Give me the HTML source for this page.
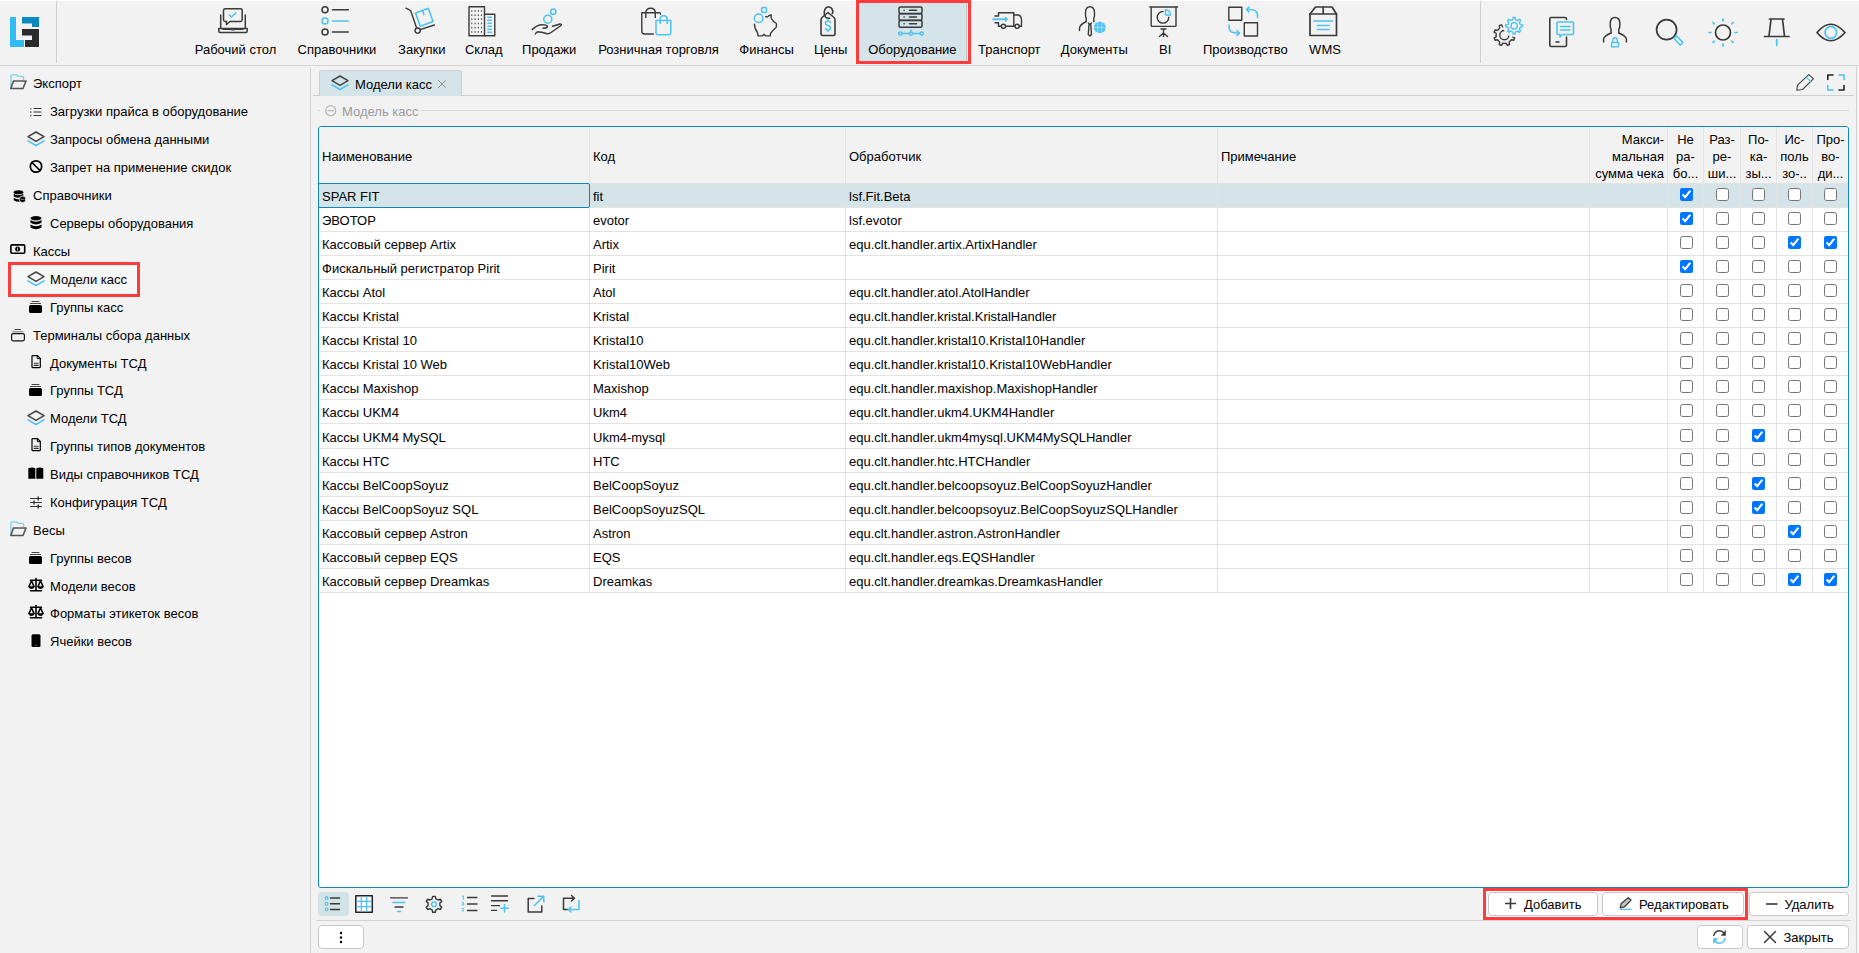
<!DOCTYPE html><html><head><meta charset="utf-8"><style>
html,body{margin:0;padding:0}
body{width:1859px;height:953px;overflow:hidden;position:relative;background:#f2f2f2;font-family:"Liberation Sans",sans-serif;font-size:13px;color:#000}
.t{position:absolute;white-space:nowrap}
svg{overflow:visible}
input[type=checkbox]{position:absolute;margin:0;width:13px;height:13px}
</style></head><body><div style="position:absolute;left:0px;top:0px;width:1859px;height:1px;background:#fff"></div><div style="position:absolute;left:10px;top:17px;width:6px;height:30px;background:#2fbcf3"></div><div style="position:absolute;left:10px;top:40px;width:13.6px;height:7px;background:#2fbcf3"></div><svg style="position:absolute;left:22px;top:17px" width="17" height="30" viewBox="0 0 17 30"><path d="M0 0H17V10H10V6.5H0Z" fill="#0b89bf"/><path d="M0 12H17V30H3V23H10V18.5H0Z" fill="#2b2b2b"/></svg><div style="position:absolute;left:56px;top:1px;width:1px;height:62px;background:#cfcfcf"></div><div style="position:absolute;left:1480px;top:1px;width:1px;height:62px;background:#cfcfcf"></div><div style="position:absolute;left:0px;top:65px;width:1859px;height:1px;background:#d3d3d3"></div><div style="position:absolute;left:856px;top:0px;width:115px;height:64px;background:#ff3b3b"></div><div style="position:absolute;left:859px;top:3px;width:109px;height:58px;background:#d4e4e8"></div><div style="position:absolute;left:966px;top:4px;width:1px;height:56px;background:#b9c9cd"></div><svg style="position:absolute;left:218px;top:8px" width="30" height="25" viewBox="0 0 30 25" fill="none" stroke-linecap="round" stroke-linejoin="round"><g stroke="#3a3a3a" stroke-width="1.5"><path d="M2.7 7V20M27.3 7V20"/><path d="M0.8 20.5H29.2V23Q29.2 24.5 27.7 24.5H2.3Q0.8 24.5 0.8 23Z"/><path d="M5 21.3H12Q15 22.3 18 21.3H25" stroke-width="1.2"/><path d="M5.5 2.5Q5.5 0.8 7.2 0.8H22.5Q24.2 0.8 24.2 2.5V11.8Q24.2 13.5 22.5 13.5H12L8.5 16.5V13.5H7.2Q5.5 13.5 5.5 11.8Z"/></g><path d="M11.5 7L13.5 9L18 4.8" stroke="#4cc3f1" stroke-width="1.5"/></svg><div class="t" style="left:135.5px;top:42px;width:200px;text-align:center;line-height:16px;">Рабочий стол</div><svg style="position:absolute;left:321px;top:6px" width="28" height="30" viewBox="0 0 28 30" fill="none" stroke-linecap="round" stroke-linejoin="round"><g stroke="#3a3a3a" stroke-width="1.5"><circle cx="4" cy="3.7" r="3"/><circle cx="4" cy="26" r="3"/><path d="M11.5 3.7H27.3M11.5 26H27.3"/></g><g stroke="#4cc3f1" stroke-width="1.5"><circle cx="4" cy="15" r="3"/><path d="M11.5 15H27.3"/></g></svg><div class="t" style="left:237.0px;top:42px;width:200px;text-align:center;line-height:16px;">Справочники</div><svg style="position:absolute;left:405px;top:7px" width="30" height="27" viewBox="0 0 30 27" fill="none" stroke-linecap="round" stroke-linejoin="round"><g stroke="#3a3a3a" stroke-width="1.4"><path d="M1 1.2L5.7 3.7L11.6 21"/><path d="M15 22.6L29.4 18"/><circle cx="12.7" cy="23.6" r="2.6"/></g><g stroke="#4cc3f1" stroke-width="1.6"><path d="M10.5 6.1L23.3 1.3L28 14.5L15.3 19.3Z"/><path d="M17.8 3.9L18.9 7.6"/></g></svg><div class="t" style="left:321.75px;top:42px;width:200px;text-align:center;line-height:16px;">Закупки</div><svg style="position:absolute;left:468px;top:5.5px" width="28" height="31" viewBox="0 0 28 31" fill="none" stroke-linecap="round" stroke-linejoin="round"><g stroke="#3a3a3a" stroke-width="1.4"><path d="M1 0.8H16.5V29.8H1Z"/><path d="M16.5 8.3H26.8V29.8H16.5"/></g><g fill="#555"><rect x="3.2" y="4.2" width="1.2" height="1.6"/><rect x="3.2" y="8.4" width="1.2" height="1.6"/><rect x="3.2" y="12.4" width="1.2" height="1.6"/><rect x="3.2" y="16.7" width="1.2" height="1.6"/><rect x="3.2" y="20.8" width="1.2" height="1.6"/><rect x="3.2" y="25.1" width="1.2" height="1.6"/><rect x="6.5" y="4.2" width="1.2" height="1.6"/><rect x="6.5" y="8.4" width="1.2" height="1.6"/><rect x="6.5" y="12.4" width="1.2" height="1.6"/><rect x="6.5" y="16.7" width="1.2" height="1.6"/><rect x="6.5" y="20.8" width="1.2" height="1.6"/><rect x="6.5" y="25.1" width="1.2" height="1.6"/><rect x="9.8" y="4.2" width="1.2" height="1.6"/><rect x="9.8" y="8.4" width="1.2" height="1.6"/><rect x="9.8" y="12.4" width="1.2" height="1.6"/><rect x="9.8" y="16.7" width="1.2" height="1.6"/><rect x="9.8" y="20.8" width="1.2" height="1.6"/><rect x="9.8" y="25.1" width="1.2" height="1.6"/><rect x="12.9" y="4.2" width="1.2" height="1.6"/><rect x="12.9" y="8.4" width="1.2" height="1.6"/><rect x="12.9" y="12.4" width="1.2" height="1.6"/><rect x="12.9" y="16.7" width="1.2" height="1.6"/><rect x="12.9" y="20.8" width="1.2" height="1.6"/><rect x="12.9" y="25.1" width="1.2" height="1.6"/></g><g stroke="#4cc3f1" stroke-width="1.5" stroke-linecap="butt"><path d="M19.3 11.3H23.8M19.3 14.3H23.8M19.3 17.3H23.8M19.3 20.3H23.8M19.3 23.3H23.8M19.3 26.3H23.8"/></g></svg><div class="t" style="left:383.75px;top:42px;width:200px;text-align:center;line-height:16px;">Склад</div><svg style="position:absolute;left:532px;top:7.5px" width="30" height="27" viewBox="0 0 30 27" fill="none" stroke-linecap="round" stroke-linejoin="round"><g stroke="#3a3a3a" stroke-width="1.5"><path d="M0.3 21.4Q5 17 9 16.7Q15.5 16.5 15.5 18.7Q15 20.2 11 20.2"/><path d="M3.3 26Q4.5 23.7 6 23.7Q11 24 15 25.7Q17 26 19 24.5L29 17.5Q30 16 28 16L20.5 18.2"/></g><g stroke="#4cc3f1" stroke-width="1.5"><circle cx="15.8" cy="11.2" r="4"/><circle cx="21.3" cy="3.7" r="2.6"/></g></svg><div class="t" style="left:449.20000000000005px;top:42px;width:200px;text-align:center;line-height:16px;">Продажи</div><svg style="position:absolute;left:641px;top:7px" width="31" height="28" viewBox="0 0 31 28" fill="none" stroke-linecap="round" stroke-linejoin="round"><g stroke="#3a3a3a" stroke-width="1.4"><path d="M12.3 27H3.5Q0.8 27 0.8 24V5.7H18.5Q19.5 5.7 19.5 7"/><path d="M4.8 10.5V6Q4.8 1.2 9.8 1.2Q14.3 1.2 14.3 6V10.5"/></g><g stroke="#4cc3f1" stroke-width="1.5"><path d="M15 13.6H29.8V25.5Q29.8 27.8 27.5 27.8H17.3Q15 27.8 15 25.5Z"/><path d="M19.2 16.5V12.5Q19.2 8.8 22.8 8.8Q26.2 8.8 26.2 12.5V16.5"/></g></svg><div class="t" style="left:558.5px;top:42px;width:200px;text-align:center;line-height:16px;">Розничная торговля</div><svg style="position:absolute;left:752.5px;top:5.5px" width="24" height="30" viewBox="0 0 24 30" fill="none" stroke-linecap="round" stroke-linejoin="round"><path d="M1.4 18.1Q1.5 23 4.5 26.5L5 29.9H9.3L11 28.2L12.7 29.9H17.4V27.6Q20 24 23 21.5Q24 19 23 17L20.7 15.7Q19.5 13.5 18.2 12.5V9Q16 9.2 14.8 10.6Q13.5 11.3 12.8 10.5" stroke="#3a3a3a" stroke-width="1.4"/><g stroke="#4cc3f1" stroke-width="1.5"><circle cx="5.6" cy="12.2" r="4.3"/><circle cx="11.1" cy="3.9" r="2.6"/></g></svg><div class="t" style="left:666.6px;top:42px;width:200px;text-align:center;line-height:16px;">Финансы</div><svg style="position:absolute;left:820px;top:5.5px" width="17" height="30" viewBox="0 0 17 30" fill="none" stroke-linecap="round" stroke-linejoin="round"><g stroke="#3a3a3a" stroke-width="1.6"><path d="M8 6.5L2 11.5Q1 12.5 1 14V28Q1 29.5 2.5 29.5H13.5Q15 29.5 15 28V14Q15 12.5 14 11.5L8 6.5"/><path d="M9.5 12.3Q7 12.5 5.5 11Q3.8 9 4.3 5.5Q5 1 8.5 1Q12 1 12.7 5Q13 6.5 12.3 7.5"/></g><g stroke="#4cc3f1" stroke-width="1.5"><path d="M10.5 16.5Q9.5 15 8 15Q5.5 15 5.5 17Q5.5 19 8 19.5Q10.5 20 10.5 22Q10.5 24 8 24Q6.5 24 5.5 22.5M8 13.5V15M8 24V25.5"/></g></svg><div class="t" style="left:730.6px;top:42px;width:200px;text-align:center;line-height:16px;">Цены</div><svg style="position:absolute;left:898px;top:6px" width="25" height="30" viewBox="0 0 25 30" fill="none" stroke-linecap="round" stroke-linejoin="round"><g stroke="#3a3a3a" stroke-width="1.5"><rect x="1" y="1" width="23" height="6.5" rx="1.5"/><rect x="1" y="7.7" width="23" height="6.5" rx="1.5"/><rect x="1" y="14.5" width="23" height="6.7" rx="1.5"/><path d="M6 4.3H6.2M11.5 4.3H18.5M6 11H6.2M11.5 11H18.5M6 17.8H6.2M11.5 17.8H18.5" stroke-width="1.5"/></g><g stroke="#4cc3f1" stroke-width="1.5"><circle cx="2.3" cy="27.5" r="1.6"/><circle cx="13" cy="27.5" r="1.6"/><circle cx="23.7" cy="27.5" r="1.6"/><path d="M4 27.5H11.4M14.6 27.5H22M13 25.9V24"/></g></svg><div class="t" style="left:812.4px;top:42px;width:200px;text-align:center;line-height:16px;">Оборудование</div><svg style="position:absolute;left:992px;top:12px" width="30" height="17" viewBox="0 0 30 17" fill="none" stroke-linecap="round" stroke-linejoin="round"><g stroke="#3a3a3a" stroke-width="1.4"><path d="M3 4H6.5V0.8H21.8V14.2"/><path d="M21.8 3H26.2Q29.5 3.5 29.5 8.5V14.2H27.3"/><path d="M9.3 14.2H9.5M13.6 14.2H22.9"/><path d="M3 10.7H6.5V14.2H9.2"/><circle cx="11.4" cy="14.3" r="2.1"/><circle cx="25.1" cy="14.3" r="2.1"/></g><path d="M0.5 7.3H13.5" stroke="#4cc3f1" stroke-width="1.9" stroke-linecap="butt"/><path d="M12.8 4.2L16.3 7.3L12.8 10.4Z" fill="#4cc3f1"/></svg><div class="t" style="left:909.3px;top:42px;width:200px;text-align:center;line-height:16px;">Транспорт</div><svg style="position:absolute;left:1079px;top:5.5px" width="28" height="30" viewBox="0 0 28 30" fill="none" stroke-linecap="round" stroke-linejoin="round"><g stroke="#3a3a3a" stroke-width="1.4"><path d="M7.2 15.5V12Q6.5 11 6.5 9.5V7Q6.5 0.8 11 0.8Q15.5 0.8 15.5 7V9.5Q15.5 11 14.8 12V15.8"/><path d="M7.2 15.5Q1 18.5 0.5 22V24.5"/><path d="M9.3 17L10.8 18.5L12.5 17M10 18.5L9.3 28.5L11 30L12.5 28.5L11.8 18.5"/></g><circle cx="20.8" cy="21.4" r="5.9" fill="#4cc3f1"/><g stroke="#e8f6fc" stroke-width="0.6" stroke-dasharray="0.8 1.2"><path d="M18.8 16V27M22.8 16V27M15.5 21.4H26"/></g></svg><div class="t" style="left:994.25px;top:42px;width:200px;text-align:center;line-height:16px;">Документы</div><svg style="position:absolute;left:1149px;top:5.5px" width="30" height="31" viewBox="0 0 30 31" fill="none" stroke-linecap="round" stroke-linejoin="round"><g stroke="#3a3a3a" stroke-width="1.4"><path d="M0.8 1H28.5"/><path d="M2.2 1.3V19.4Q2.2 20.4 3.2 20.4H26Q27 20.4 27 19.4V1.3"/><path d="M12 23H17M14.5 23V30.5M14.5 27L10.5 30.5M14.5 27L18.5 30.5"/><path d="M14 5.5A5.8 5.8 0 1 0 19.8 11.3"/></g><path d="M16.5 3.8V9H21.6Q21.3 4.2 16.5 3.8Z" stroke="#4cc3f1" stroke-width="1.4"/></svg><div class="t" style="left:1065.25px;top:42px;width:200px;text-align:center;line-height:16px;">BI</div><svg style="position:absolute;left:1228px;top:5.5px" width="31" height="31" viewBox="0 0 31 31" fill="none" stroke-linecap="round" stroke-linejoin="round"><g stroke="#3a3a3a" stroke-width="1.4"><rect x="0.8" y="1.2" width="13" height="13"/><rect x="16.3" y="16.8" width="13.2" height="13.2"/></g><g stroke="#4cc3f1" stroke-width="1.6"><path d="M29.5 11.5V9.5Q29.5 3.5 22.5 3.5H18.5M21 1L18.5 3.5L21 6"/><path d="M1 19V21Q1 27 8 27H11.5M9 24.5L11.5 27L9 29.5"/></g></svg><div class="t" style="left:1145.3px;top:42px;width:200px;text-align:center;line-height:16px;">Производство</div><svg style="position:absolute;left:1309px;top:6px" width="29" height="31" viewBox="0 0 29 31" fill="none" stroke-linecap="round" stroke-linejoin="round"><g stroke="#3a3a3a" stroke-width="1.7"><path d="M6.5 1H23L27.5 8V29.5H1V8Z"/><path d="M1 8H27.5M14.2 1V8"/></g><g stroke="#4cc3f1" stroke-width="1.7"><path d="M5 15H23.5M8.5 19.5H20M8.5 23.5H20"/></g></svg><div class="t" style="left:1225.0px;top:42px;width:200px;text-align:center;line-height:16px;">WMS</div><svg style="position:absolute;left:1493px;top:17px" width="30" height="30" viewBox="0 0 30 30" fill="none" stroke-linecap="round" stroke-linejoin="round"><defs><mask id="gm"><rect x="-5" y="-5" width="40" height="40" fill="#fff"/><circle cx="21.1" cy="8.8" r="11" fill="#000"/></mask></defs><g mask="url(#gm)" stroke="#3a3a3a" stroke-width="1.4"><path d="M11.40 9.80L12.96 9.95L14.39 7.82L16.55 8.72L16.07 11.24L17.27 12.23L18.26 13.43L20.78 12.95L21.68 15.11L19.55 16.54L19.70 18.10L19.55 19.66L21.68 21.09L20.78 23.25L18.26 22.77L17.27 23.97L16.07 24.96L16.55 27.48L14.39 28.38L12.96 26.25L11.40 26.40L9.84 26.25L8.41 28.38L6.25 27.48L6.73 24.96L5.53 23.97L4.54 22.77L2.02 23.25L1.12 21.09L3.25 19.66L3.10 18.10L3.25 16.54L1.12 15.11L2.02 12.95L4.54 13.43L5.53 12.23L6.73 11.24L6.25 8.72L8.41 7.82L9.84 9.95Z"/><path d="M11.5 13.5A4.6 4.6 0 1 0 16 18.3"/></g><g stroke="#4cc3f1" stroke-width="1.4"><path d="M18.69 2.98L19.82 2.63L20.18 0.45L22.02 0.45L22.38 2.63L23.51 2.98L24.56 3.53L26.35 2.24L27.66 3.55L26.37 5.34L26.92 6.39L27.27 7.52L29.45 7.88L29.45 9.72L27.27 10.08L26.92 11.21L26.37 12.26L27.66 14.05L26.35 15.36L24.56 14.07L23.51 14.62L22.38 14.97L22.02 17.15L20.18 17.15L19.82 14.97L18.69 14.62L17.64 14.07L15.85 15.36L14.54 14.05L15.83 12.26L15.28 11.21L14.93 10.08L12.75 9.72L12.75 7.88L14.93 7.52L15.28 6.39L15.83 5.34L14.54 3.55L15.85 2.24L17.64 3.53Z"/><circle cx="21.1" cy="8.8" r="3.2"/></g></svg><svg style="position:absolute;left:1549px;top:17px" width="25" height="30" viewBox="0 0 25 30" fill="none" stroke-linecap="round" stroke-linejoin="round"><g stroke="#3a3a3a" stroke-width="1.6"><path d="M17.5 2.5V1.8Q17.5 0.5 16 0.5H2Q0.8 0.5 0.8 2V28Q0.8 29.5 2.2 29.5H16.2Q17.5 29.5 17.5 28V20"/><path d="M7 25H10"/></g><g stroke="#4cc3f1" stroke-width="1.6"><path d="M8 6Q8 5 9 5H23.5Q24.5 5 24.5 6V16.5Q24.5 17.5 23.5 17.5H13.5L11 20V17.5H9Q8 17.5 8 16.5Z"/><path d="M11.5 9.5H21M11.5 13H21"/></g></svg><svg style="position:absolute;left:1603px;top:17px" width="24" height="30" viewBox="0 0 24 30" fill="none" stroke-linecap="round" stroke-linejoin="round"><g stroke="#3a3a3a" stroke-width="1.5"><path d="M8 16V12Q7.3 11 7.3 9.5V6Q7.3 0.5 12 0.5Q16.8 0.5 16.8 6V9.5Q16.8 11 15.8 12V16"/><path d="M8 16Q1 19 0.6 22V25M15.8 16Q23 19 23.4 22V25"/></g><g stroke="#4cc3f1" stroke-width="1.4"><rect x="8.5" y="25.5" width="7" height="4.2"/><path d="M9.8 25.5V23.5Q9.8 20.8 12 20.8Q14.2 20.8 14.2 23.5V25.5"/></g></svg><svg style="position:absolute;left:1656px;top:18px" width="28" height="29" viewBox="0 0 28 29" fill="none" stroke-linecap="round" stroke-linejoin="round"><circle cx="10.6" cy="11.7" r="10" stroke="#3a3a3a" stroke-width="1.7"/><path d="M18 20.2L20.3 17.9L27 24.4L24.2 27.2Z" stroke="#4cc3f1" stroke-width="1.5"/></svg><svg style="position:absolute;left:1708px;top:17.5px" width="30" height="30" viewBox="0 0 30 30" fill="none" stroke-linecap="round" stroke-linejoin="round"><circle cx="15" cy="14.5" r="7.5" stroke="#3a3a3a" stroke-width="1.7"/><g stroke="#4cc3f1" stroke-width="1.7"><path d="M15 1V3M15 26V28M1 14.5H3M27 14.5H29M5 4.5L6.3 5.8M23.7 23.2L25 24.5M5 24.5L6.3 23.2M23.7 5.8L25 4.5"/></g></svg><svg style="position:absolute;left:1764px;top:17.5px" width="26" height="30" viewBox="0 0 26 30" fill="none" stroke-linecap="round" stroke-linejoin="round"><g stroke="#3a3a3a" stroke-width="1.7"><path d="M5.5 1H20M7 1.5L5 18M18.5 1.5L20.5 18M0.5 18.5H25"/></g><path d="M12.7 21.5V27.5" stroke="#4cc3f1" stroke-width="1.7"/></svg><svg style="position:absolute;left:1815.5px;top:21.5px" width="30" height="21" viewBox="0 0 30 21" fill="none" stroke-linecap="round" stroke-linejoin="round"><path d="M1 10.5Q14.5 -6 29 10.5Q14.5 27 1 10.5Z" stroke="#3a3a3a" stroke-width="1.7"/><circle cx="14.8" cy="10.5" r="5.8" stroke="#4cc3f1" stroke-width="1.7"/></svg><div style="position:absolute;left:310px;top:68px;width:1px;height:885px;background:#d3d3d3"></div><div style="position:absolute;left:8px;top:262px;width:132px;height:35px;border:3px solid #ff3b3b;box-sizing:border-box;background:#f5f6f6"></div><svg style="position:absolute;left:10px;top:74px" width="17" height="15" viewBox="0 0 17 15" fill="none" stroke-linecap="round" stroke-linejoin="round"><path d="M1 14V2Q1 0.8 2 0.8H6.5L8 2.3H12.5Q13.5 2.3 13.5 3.5V5.5" stroke="#4cc3f1" stroke-width="1.3" opacity="0.7"/><path d="M3.5 7H16L13 14.5H0.8Z" stroke="#555" stroke-width="1.6"/></svg><div class="t" style="left:33px;top:76px;line-height:16px;">Экспорт</div><svg style="position:absolute;left:29.5px;top:106.5px" width="12" height="10" viewBox="0 0 12 10" fill="none" stroke-linecap="round" stroke-linejoin="round"><g stroke="#333" stroke-width="1.2"><path d="M4 1.5H11M4 5H11M4 8.5H11"/><path d="M0.8 1.5V2M0.8 4.5V5.5M0.8 8V9" stroke="#555"/></g></svg><div class="t" style="left:50px;top:104px;line-height:16px;">Загрузки прайса в оборудование</div><svg style="position:absolute;left:27px;top:131px" width="18" height="15" viewBox="0 0 18 15" fill="none" stroke-linecap="round" stroke-linejoin="round"><path d="M9 1L17 5.7L9 10.3L1 5.7Z" stroke="#444" stroke-width="1.5"/><path d="M1 9.8L9 14.5L17 9.8" stroke="#4cc3f1" stroke-width="1.5"/></svg><div class="t" style="left:50px;top:132px;line-height:16px;">Запросы обмена данными</div><svg style="position:absolute;left:28.5px;top:159.5px" width="14" height="13" viewBox="0 0 14 13" fill="none" stroke-linecap="round" stroke-linejoin="round"><circle cx="7" cy="6.5" r="5.7" stroke="#000" stroke-width="1.7"/><path d="M3 2.5L11 10.5" stroke="#000" stroke-width="1.7"/></svg><div class="t" style="left:50px;top:160px;line-height:16px;">Запрет на применение скидок</div><svg style="position:absolute;left:12.5px;top:189.5px" width="14" height="13" viewBox="0 0 14 13" fill="none" stroke-linecap="round" stroke-linejoin="round"><g fill="#000"><ellipse cx="5.5" cy="2.2" rx="4.8" ry="2"/><path d="M0.7 3.8Q5.5 6.8 10.3 3.8V6.2Q5.5 9.2 0.7 6.2Z"/><path d="M0.7 7.8Q5.5 10.8 10.3 7.8V10.2Q5.5 13.2 0.7 10.2Z"/></g><circle cx="9.6" cy="9.3" r="3.3" fill="#000" stroke="#f2f2f2" stroke-width="0.8"/><path d="M8 9.3H11.2" stroke="#999" stroke-width="0.9"/></svg><div class="t" style="left:33px;top:188px;line-height:16px;">Справочники</div><svg style="position:absolute;left:29.5px;top:215.5px" width="12" height="14" viewBox="0 0 12 14" fill="none" stroke-linecap="round" stroke-linejoin="round"><g fill="#000"><ellipse cx="6" cy="2.3" rx="5.5" ry="2.2"/><path d="M0.5 4Q6 7.5 11.5 4V6.8Q6 10.3 0.5 6.8Z"/><path d="M0.5 8.5Q6 12 11.5 8.5V11.5Q6 15 0.5 11.5Z"/></g></svg><div class="t" style="left:50px;top:216px;line-height:16px;">Серверы оборудования</div><svg style="position:absolute;left:10px;top:244px" width="16" height="11" viewBox="0 0 16 11" fill="none" stroke-linecap="round" stroke-linejoin="round"><rect x="0.9" y="0.9" width="13.8" height="8.4" rx="1" stroke="#000" stroke-width="1.6"/><circle cx="7.6" cy="5" r="2.5" fill="#000"/><path d="M7.6 3.9V6.2" stroke="#ddd" stroke-width="0.9"/></svg><div class="t" style="left:33px;top:244px;line-height:16px;">Кассы</div><svg style="position:absolute;left:27px;top:271px" width="18" height="15" viewBox="0 0 18 15" fill="none" stroke-linecap="round" stroke-linejoin="round"><path d="M9 1L17 5.7L9 10.3L1 5.7Z" stroke="#444" stroke-width="1.5"/><path d="M1 9.8L9 14.5L17 9.8" stroke="#4cc3f1" stroke-width="1.5"/></svg><div class="t" style="left:50px;top:272px;line-height:16px;">Модели касс</div><svg style="position:absolute;left:29px;top:301px" width="13" height="12" viewBox="0 0 13 12" fill="none" stroke-linecap="round" stroke-linejoin="round"><path d="M3 0.5H10M1.5 2.5H11.5" stroke="#444" stroke-width="1"/><rect x="0" y="4" width="13" height="8" rx="1.6" fill="#000"/></svg><div class="t" style="left:50px;top:300px;line-height:16px;">Группы касс</div><svg style="position:absolute;left:11px;top:329px" width="14" height="12" viewBox="0 0 14 12" fill="none" stroke-linecap="round" stroke-linejoin="round"><path d="M4 0.5H9.5" stroke="#444" stroke-width="1"/><path d="M1.5 2.8H12" stroke="#777" stroke-width="1"/><rect x="0.6" y="4.6" width="12.8" height="7.2" rx="1.5" stroke="#111" stroke-width="1.2"/></svg><div class="t" style="left:33px;top:328px;line-height:16px;">Терминалы сбора данных</div><svg style="position:absolute;left:30.5px;top:355.2px" width="10" height="13" viewBox="0 0 10 13" fill="none" stroke-linecap="round" stroke-linejoin="round"><path d="M1 1.3Q1 0.6 1.8 0.6H6.5L9.3 3.4V12Q9.3 12.6 8.6 12.6H1.8Q1 12.6 1 12Z" stroke="#000" stroke-width="1.2"/><path d="M6.3 0.6V3.6H9.3" stroke="#000" stroke-width="1"/><path d="M3.2 8.3H7.2M3.2 10.4H7.2" stroke="#333" stroke-width="1.1"/></svg><div class="t" style="left:50px;top:356px;line-height:16px;">Документы ТСД</div><svg style="position:absolute;left:29px;top:384px" width="13" height="12" viewBox="0 0 13 12" fill="none" stroke-linecap="round" stroke-linejoin="round"><path d="M3 0.5H10M1.5 2.5H11.5" stroke="#444" stroke-width="1"/><rect x="0" y="4" width="13" height="8" rx="1.6" fill="#000"/></svg><div class="t" style="left:50px;top:383px;line-height:16px;">Группы ТСД</div><svg style="position:absolute;left:27px;top:410px" width="18" height="15" viewBox="0 0 18 15" fill="none" stroke-linecap="round" stroke-linejoin="round"><path d="M9 1L17 5.7L9 10.3L1 5.7Z" stroke="#444" stroke-width="1.5"/><path d="M1 9.8L9 14.5L17 9.8" stroke="#4cc3f1" stroke-width="1.5"/></svg><div class="t" style="left:50px;top:411px;line-height:16px;">Модели ТСД</div><svg style="position:absolute;left:30.5px;top:438.2px" width="10" height="13" viewBox="0 0 10 13" fill="none" stroke-linecap="round" stroke-linejoin="round"><path d="M1 1.3Q1 0.6 1.8 0.6H6.5L9.3 3.4V12Q9.3 12.6 8.6 12.6H1.8Q1 12.6 1 12Z" stroke="#000" stroke-width="1.2"/><path d="M6.3 0.6V3.6H9.3" stroke="#000" stroke-width="1"/><path d="M3.2 8.3H7.2M3.2 10.4H7.2" stroke="#333" stroke-width="1.1"/></svg><div class="t" style="left:50px;top:439px;line-height:16px;">Группы типов документов</div><svg style="position:absolute;left:28px;top:467px" width="16" height="12" viewBox="0 0 16 12" fill="none" stroke-linecap="round" stroke-linejoin="round"><path d="M0.3 1.2Q4 -0.3 7.3 1.2V11.8H0.3Z M8.3 1.2Q11.6 -0.3 15.3 1.2V11.8H8.3Z" fill="#000"/></svg><div class="t" style="left:50px;top:467px;line-height:16px;">Виды справочников ТСД</div><svg style="position:absolute;left:29.5px;top:497px" width="12" height="12" viewBox="0 0 12 12" fill="none" stroke-linecap="round" stroke-linejoin="round"><g stroke="#333" stroke-width="1.1"><path d="M0.5 1.5H11.5M0.5 5.5H11.5M0.5 9.5H11.5"/></g><g stroke="#222" stroke-width="1.3"><path d="M8.2 0V3M4 4V7M8.2 8V11"/></g></svg><div class="t" style="left:50px;top:495px;line-height:16px;">Конфигурация ТСД</div><svg style="position:absolute;left:10px;top:521px" width="17" height="15" viewBox="0 0 17 15" fill="none" stroke-linecap="round" stroke-linejoin="round"><path d="M1 14V2Q1 0.8 2 0.8H6.5L8 2.3H12.5Q13.5 2.3 13.5 3.5V5.5" stroke="#4cc3f1" stroke-width="1.3" opacity="0.7"/><path d="M3.5 7H16L13 14.5H0.8Z" stroke="#555" stroke-width="1.6"/></svg><div class="t" style="left:33px;top:523px;line-height:16px;">Весы</div><svg style="position:absolute;left:29px;top:552px" width="13" height="12" viewBox="0 0 13 12" fill="none" stroke-linecap="round" stroke-linejoin="round"><path d="M3 0.5H10M1.5 2.5H11.5" stroke="#444" stroke-width="1"/><rect x="0" y="4" width="13" height="8" rx="1.6" fill="#000"/></svg><div class="t" style="left:50px;top:551px;line-height:16px;">Группы весов</div><svg style="position:absolute;left:27.5px;top:577.5px" width="16" height="14" viewBox="0 0 16 14" fill="none" stroke-linecap="round" stroke-linejoin="round"><g stroke="#000" stroke-width="1.6"><path d="M8 0.5V12.5M2.5 12.8H13.5M2.5 2.3H13.5"/><path d="M3.5 2.8L1 8.5L3.5 2.8L6 8.5M12.5 2.8L10 8.5M12.5 2.8L15 8.5"/></g><path d="M0.6 8.3H6.4Q6.2 11 3.5 11Q0.8 11 0.6 8.3ZM9.6 8.3H15.4Q15.2 11 12.5 11Q9.8 11 9.6 8.3Z" fill="#000"/></svg><div class="t" style="left:50px;top:579px;line-height:16px;">Модели весов</div><svg style="position:absolute;left:27.5px;top:604.5px" width="16" height="14" viewBox="0 0 16 14" fill="none" stroke-linecap="round" stroke-linejoin="round"><g stroke="#000" stroke-width="1.6"><path d="M8 0.5V12.5M2.5 12.8H13.5M2.5 2.3H13.5"/><path d="M3.5 2.8L1 8.5L3.5 2.8L6 8.5M12.5 2.8L10 8.5M12.5 2.8L15 8.5"/></g><path d="M0.6 8.3H6.4Q6.2 11 3.5 11Q0.8 11 0.6 8.3ZM9.6 8.3H15.4Q15.2 11 12.5 11Q9.8 11 9.6 8.3Z" fill="#000"/></svg><div class="t" style="left:50px;top:606px;line-height:16px;">Форматы этикеток весов</div><svg style="position:absolute;left:30.5px;top:633.5px" width="10" height="14" viewBox="0 0 10 14" fill="none" stroke-linecap="round" stroke-linejoin="round"><rect x="0.5" y="0.3" width="9" height="12.7" rx="1.5" fill="#000"/><rect x="4" y="10.8" width="1.8" height="1.1" fill="#555"/></svg><div class="t" style="left:50px;top:634px;line-height:16px;">Ячейки весов</div><div style="position:absolute;left:1856px;top:67px;width:1px;height:886px;background:#d3d3d3"></div><div style="position:absolute;left:319px;top:70px;width:143px;height:26px;background:#d4e4e8;border:1px solid #cfcfcf;border-bottom:none;border-radius:3px 3px 0 0;box-sizing:border-box"></div><div style="position:absolute;left:313px;top:95px;width:1541px;height:1px;background:#d0d0d0"></div><div style="position:absolute;left:320px;top:95px;width:141px;height:1px;background:#d4e4e8"></div><svg style="position:absolute;left:331px;top:75px" width="18" height="16" viewBox="0 0 18 16" fill="none" stroke-linecap="round" stroke-linejoin="round"><path d="M9 1L17 5.7L9 10.3L1 5.7Z" stroke="#444" stroke-width="1.5"/><path d="M1 9.8L9 14.5L17 9.8" stroke="#4cc3f1" stroke-width="1.5"/></svg><div class="t" style="left:355px;top:77px;line-height:16px;">Модели касс</div><svg style="position:absolute;left:437.5px;top:79.5px" width="8" height="8" viewBox="0 0 8 8" fill="none" stroke-linecap="round" stroke-linejoin="round"><path d="M0.5 0.5L7.5 7.5M7.5 0.5L0.5 7.5" stroke="#858585" stroke-width="0.9"/></svg><svg style="position:absolute;left:1796px;top:74px" width="19" height="17" viewBox="0 0 19 17" fill="none" stroke-linecap="round" stroke-linejoin="round"><path d="M1.5 11.2L12.75 0.6L17.5 4.7L6.6 15.5L0.8 16.2Z" stroke="#444" stroke-width="1.1"/><path d="M10.2 3.2L14.6 7.4" stroke="#4cc3f1" stroke-width="1.2"/></svg><svg style="position:absolute;left:1827px;top:74px" width="18" height="17" viewBox="0 0 18 17" fill="none" stroke-linecap="round" stroke-linejoin="round"><g stroke-width="1.6" fill="none"><path d="M0.8 5.5V1H6" stroke="#222"/><path d="M12 1H17V5.5" stroke="#4cc3f1"/><path d="M0.8 11.5V16H6" stroke="#4cc3f1"/><path d="M12 16H17V11.5" stroke="#222"/></g></svg><div style="position:absolute;left:318px;top:110px;width:2px;height:1px;background:#d0d0d0"></div><svg style="position:absolute;left:324.5px;top:105px" width="12" height="12" viewBox="0 0 12 12" fill="none" stroke-linecap="round" stroke-linejoin="round"><circle cx="5.7" cy="5.7" r="5" stroke="#b8b8b8" stroke-width="1.3"/><path d="M3 5.7H8.4" stroke="#b8b8b8" stroke-width="1.3"/></svg><div class="t" style="left:342px;top:104px;line-height:16px;color:#9c9c9c">Модель касс</div><div style="position:absolute;left:421px;top:110px;width:1428px;height:1px;background:#d6d6d6"></div><div style="position:absolute;left:318px;top:126px;width:1531px;height:762px;background:#fff;border:1px solid #0b88bd;border-radius:3px;box-sizing:border-box"></div><div style="position:absolute;left:319px;top:127px;width:1529px;height:56px;background:#f2f2f2;border-radius:2px 2px 0 0"></div><div style="position:absolute;left:319px;top:184px;width:1529px;height:23px;background:#d4e4e8"></div><div style="position:absolute;left:319px;top:183px;width:1529px;height:1px;background:#e2e2e2"></div><div style="position:absolute;left:319px;top:207px;width:1529px;height:1px;background:#e3e3e3"></div><div style="position:absolute;left:319px;top:231px;width:1529px;height:1px;background:#e3e3e3"></div><div style="position:absolute;left:319px;top:255px;width:1529px;height:1px;background:#e3e3e3"></div><div style="position:absolute;left:319px;top:279px;width:1529px;height:1px;background:#e3e3e3"></div><div style="position:absolute;left:319px;top:303px;width:1529px;height:1px;background:#e3e3e3"></div><div style="position:absolute;left:319px;top:327px;width:1529px;height:1px;background:#e3e3e3"></div><div style="position:absolute;left:319px;top:351px;width:1529px;height:1px;background:#e3e3e3"></div><div style="position:absolute;left:319px;top:375px;width:1529px;height:1px;background:#e3e3e3"></div><div style="position:absolute;left:319px;top:399px;width:1529px;height:1px;background:#e3e3e3"></div><div style="position:absolute;left:319px;top:423px;width:1529px;height:1px;background:#e3e3e3"></div><div style="position:absolute;left:319px;top:448px;width:1529px;height:1px;background:#e3e3e3"></div><div style="position:absolute;left:319px;top:472px;width:1529px;height:1px;background:#e3e3e3"></div><div style="position:absolute;left:319px;top:496px;width:1529px;height:1px;background:#e3e3e3"></div><div style="position:absolute;left:319px;top:520px;width:1529px;height:1px;background:#e3e3e3"></div><div style="position:absolute;left:319px;top:544px;width:1529px;height:1px;background:#e3e3e3"></div><div style="position:absolute;left:319px;top:568px;width:1529px;height:1px;background:#e3e3e3"></div><div style="position:absolute;left:319px;top:592px;width:1529px;height:1px;background:#e3e3e3"></div><div style="position:absolute;left:589px;top:127px;width:1px;height:466px;background:#e3e3e3"></div><div style="position:absolute;left:845px;top:127px;width:1px;height:466px;background:#e3e3e3"></div><div style="position:absolute;left:1217px;top:127px;width:1px;height:466px;background:#e3e3e3"></div><div style="position:absolute;left:1589px;top:127px;width:1px;height:466px;background:#e3e3e3"></div><div style="position:absolute;left:1667px;top:127px;width:1px;height:466px;background:#e3e3e3"></div><div style="position:absolute;left:1703px;top:127px;width:1px;height:466px;background:#e3e3e3"></div><div style="position:absolute;left:1740px;top:127px;width:1px;height:466px;background:#e3e3e3"></div><div style="position:absolute;left:1776px;top:127px;width:1px;height:466px;background:#e3e3e3"></div><div style="position:absolute;left:1812px;top:127px;width:1px;height:466px;background:#e3e3e3"></div><div style="position:absolute;left:318px;top:183px;width:272px;height:25px;border:1px solid #0b88bd;border-radius:2px;box-sizing:border-box"></div><div class="t" style="left:322px;top:149px;line-height:16px;">Наименование</div><div class="t" style="left:593px;top:149px;line-height:16px;">Код</div><div class="t" style="left:849px;top:149px;line-height:16px;">Обработчик</div><div class="t" style="left:1221px;top:149px;line-height:16px;">Примечание</div><div class="t" style="left:1590px;top:131px;width:74px;text-align:right;line-height:17px">Макси-<br>мальная<br>сумма чека</div><div class="t" style="left:1668px;top:131px;width:35px;text-align:center;line-height:17px;overflow:hidden">Не<br>ра-<br>бо...</div><div class="t" style="left:1704px;top:131px;width:36px;text-align:center;line-height:17px;overflow:hidden">Раз-<br>ре-<br>ши...</div><div class="t" style="left:1741px;top:131px;width:35px;text-align:center;line-height:17px;overflow:hidden">По-<br>ка-<br>зы...</div><div class="t" style="left:1777px;top:131px;width:35px;text-align:center;line-height:17px;overflow:hidden">Ис-<br>поль<br>зо-..</div><div class="t" style="left:1813px;top:131px;width:35px;text-align:center;line-height:17px;overflow:hidden">Про-<br>во-<br>ди...</div><div class="t" style="left:322px;top:189px;line-height:16px;">SPAR FIT</div><div class="t" style="left:593px;top:189px;line-height:16px;">fit</div><div class="t" style="left:849px;top:189px;line-height:16px;">lsf.Fit.Beta</div><input type="checkbox" style="left:1680px;top:188px" checked><input type="checkbox" style="left:1716px;top:188px"><input type="checkbox" style="left:1752px;top:188px"><input type="checkbox" style="left:1788px;top:188px"><input type="checkbox" style="left:1824px;top:188px"><div class="t" style="left:322px;top:213px;line-height:16px;">ЭВОТОР</div><div class="t" style="left:593px;top:213px;line-height:16px;">evotor</div><div class="t" style="left:849px;top:213px;line-height:16px;">lsf.evotor</div><input type="checkbox" style="left:1680px;top:212px" checked><input type="checkbox" style="left:1716px;top:212px"><input type="checkbox" style="left:1752px;top:212px"><input type="checkbox" style="left:1788px;top:212px"><input type="checkbox" style="left:1824px;top:212px"><div class="t" style="left:322px;top:237px;line-height:16px;">Кассовый сервер Artix</div><div class="t" style="left:593px;top:237px;line-height:16px;">Artix</div><div class="t" style="left:849px;top:237px;line-height:16px;">equ.clt.handler.artix.ArtixHandler</div><input type="checkbox" style="left:1680px;top:236px"><input type="checkbox" style="left:1716px;top:236px"><input type="checkbox" style="left:1752px;top:236px"><input type="checkbox" style="left:1788px;top:236px" checked><input type="checkbox" style="left:1824px;top:236px" checked><div class="t" style="left:322px;top:261px;line-height:16px;">Фискальный регистратор Pirit</div><div class="t" style="left:593px;top:261px;line-height:16px;">Pirit</div><input type="checkbox" style="left:1680px;top:260px" checked><input type="checkbox" style="left:1716px;top:260px"><input type="checkbox" style="left:1752px;top:260px"><input type="checkbox" style="left:1788px;top:260px"><input type="checkbox" style="left:1824px;top:260px"><div class="t" style="left:322px;top:285px;line-height:16px;">Кассы Atol</div><div class="t" style="left:593px;top:285px;line-height:16px;">Atol</div><div class="t" style="left:849px;top:285px;line-height:16px;">equ.clt.handler.atol.AtolHandler</div><input type="checkbox" style="left:1680px;top:284px"><input type="checkbox" style="left:1716px;top:284px"><input type="checkbox" style="left:1752px;top:284px"><input type="checkbox" style="left:1788px;top:284px"><input type="checkbox" style="left:1824px;top:284px"><div class="t" style="left:322px;top:309px;line-height:16px;">Кассы Kristal</div><div class="t" style="left:593px;top:309px;line-height:16px;">Kristal</div><div class="t" style="left:849px;top:309px;line-height:16px;">equ.clt.handler.kristal.KristalHandler</div><input type="checkbox" style="left:1680px;top:308px"><input type="checkbox" style="left:1716px;top:308px"><input type="checkbox" style="left:1752px;top:308px"><input type="checkbox" style="left:1788px;top:308px"><input type="checkbox" style="left:1824px;top:308px"><div class="t" style="left:322px;top:333px;line-height:16px;">Кассы Kristal 10</div><div class="t" style="left:593px;top:333px;line-height:16px;">Kristal10</div><div class="t" style="left:849px;top:333px;line-height:16px;">equ.clt.handler.kristal10.Kristal10Handler</div><input type="checkbox" style="left:1680px;top:332px"><input type="checkbox" style="left:1716px;top:332px"><input type="checkbox" style="left:1752px;top:332px"><input type="checkbox" style="left:1788px;top:332px"><input type="checkbox" style="left:1824px;top:332px"><div class="t" style="left:322px;top:357px;line-height:16px;">Кассы Kristal 10 Web</div><div class="t" style="left:593px;top:357px;line-height:16px;">Kristal10Web</div><div class="t" style="left:849px;top:357px;line-height:16px;">equ.clt.handler.kristal10.Kristal10WebHandler</div><input type="checkbox" style="left:1680px;top:356px"><input type="checkbox" style="left:1716px;top:356px"><input type="checkbox" style="left:1752px;top:356px"><input type="checkbox" style="left:1788px;top:356px"><input type="checkbox" style="left:1824px;top:356px"><div class="t" style="left:322px;top:381px;line-height:16px;">Кассы Maxishop</div><div class="t" style="left:593px;top:381px;line-height:16px;">Maxishop</div><div class="t" style="left:849px;top:381px;line-height:16px;">equ.clt.handler.maxishop.MaxishopHandler</div><input type="checkbox" style="left:1680px;top:380px"><input type="checkbox" style="left:1716px;top:380px"><input type="checkbox" style="left:1752px;top:380px"><input type="checkbox" style="left:1788px;top:380px"><input type="checkbox" style="left:1824px;top:380px"><div class="t" style="left:322px;top:405px;line-height:16px;">Кассы UKM4</div><div class="t" style="left:593px;top:405px;line-height:16px;">Ukm4</div><div class="t" style="left:849px;top:405px;line-height:16px;">equ.clt.handler.ukm4.UKM4Handler</div><input type="checkbox" style="left:1680px;top:404px"><input type="checkbox" style="left:1716px;top:404px"><input type="checkbox" style="left:1752px;top:404px"><input type="checkbox" style="left:1788px;top:404px"><input type="checkbox" style="left:1824px;top:404px"><div class="t" style="left:322px;top:430px;line-height:16px;">Кассы UKM4 MySQL</div><div class="t" style="left:593px;top:430px;line-height:16px;">Ukm4-mysql</div><div class="t" style="left:849px;top:430px;line-height:16px;">equ.clt.handler.ukm4mysql.UKM4MySQLHandler</div><input type="checkbox" style="left:1680px;top:429px"><input type="checkbox" style="left:1716px;top:429px"><input type="checkbox" style="left:1752px;top:429px" checked><input type="checkbox" style="left:1788px;top:429px"><input type="checkbox" style="left:1824px;top:429px"><div class="t" style="left:322px;top:454px;line-height:16px;">Кассы HTC</div><div class="t" style="left:593px;top:454px;line-height:16px;">HTC</div><div class="t" style="left:849px;top:454px;line-height:16px;">equ.clt.handler.htc.HTCHandler</div><input type="checkbox" style="left:1680px;top:453px"><input type="checkbox" style="left:1716px;top:453px"><input type="checkbox" style="left:1752px;top:453px"><input type="checkbox" style="left:1788px;top:453px"><input type="checkbox" style="left:1824px;top:453px"><div class="t" style="left:322px;top:478px;line-height:16px;">Кассы BelCoopSoyuz</div><div class="t" style="left:593px;top:478px;line-height:16px;">BelCoopSoyuz</div><div class="t" style="left:849px;top:478px;line-height:16px;">equ.clt.handler.belcoopsoyuz.BelCoopSoyuzHandler</div><input type="checkbox" style="left:1680px;top:477px"><input type="checkbox" style="left:1716px;top:477px"><input type="checkbox" style="left:1752px;top:477px" checked><input type="checkbox" style="left:1788px;top:477px"><input type="checkbox" style="left:1824px;top:477px"><div class="t" style="left:322px;top:502px;line-height:16px;">Кассы BelCoopSoyuz SQL</div><div class="t" style="left:593px;top:502px;line-height:16px;">BelCoopSoyuzSQL</div><div class="t" style="left:849px;top:502px;line-height:16px;">equ.clt.handler.belcoopsoyuz.BelCoopSoyuzSQLHandler</div><input type="checkbox" style="left:1680px;top:501px"><input type="checkbox" style="left:1716px;top:501px"><input type="checkbox" style="left:1752px;top:501px" checked><input type="checkbox" style="left:1788px;top:501px"><input type="checkbox" style="left:1824px;top:501px"><div class="t" style="left:322px;top:526px;line-height:16px;">Кассовый сервер Astron</div><div class="t" style="left:593px;top:526px;line-height:16px;">Astron</div><div class="t" style="left:849px;top:526px;line-height:16px;">equ.clt.handler.astron.AstronHandler</div><input type="checkbox" style="left:1680px;top:525px"><input type="checkbox" style="left:1716px;top:525px"><input type="checkbox" style="left:1752px;top:525px"><input type="checkbox" style="left:1788px;top:525px" checked><input type="checkbox" style="left:1824px;top:525px"><div class="t" style="left:322px;top:550px;line-height:16px;">Кассовый сервер EQS</div><div class="t" style="left:593px;top:550px;line-height:16px;">EQS</div><div class="t" style="left:849px;top:550px;line-height:16px;">equ.clt.handler.eqs.EQSHandler</div><input type="checkbox" style="left:1680px;top:549px"><input type="checkbox" style="left:1716px;top:549px"><input type="checkbox" style="left:1752px;top:549px"><input type="checkbox" style="left:1788px;top:549px"><input type="checkbox" style="left:1824px;top:549px"><div class="t" style="left:322px;top:574px;line-height:16px;">Кассовый сервер Dreamkas</div><div class="t" style="left:593px;top:574px;line-height:16px;">Dreamkas</div><div class="t" style="left:849px;top:574px;line-height:16px;">equ.clt.handler.dreamkas.DreamkasHandler</div><input type="checkbox" style="left:1680px;top:573px"><input type="checkbox" style="left:1716px;top:573px"><input type="checkbox" style="left:1752px;top:573px"><input type="checkbox" style="left:1788px;top:573px" checked><input type="checkbox" style="left:1824px;top:573px" checked><div style="position:absolute;left:318px;top:892px;width:31px;height:24px;background:#d2e3e7;border-radius:4px"></div><svg style="position:absolute;left:324px;top:895px" width="20" height="18" viewBox="0 0 20 18" fill="none" stroke-linecap="round" stroke-linejoin="round"><g stroke="#4cc3f1" stroke-width="1.1"><circle cx="2.5" cy="3" r="1.4"/><circle cx="2.5" cy="8.7" r="1.4"/><circle cx="2.5" cy="14.4" r="1.4"/></g><g stroke="#3a3a3a" stroke-width="1.5"><path d="M6.5 3H15.5M6.5 8.7H15.5M6.5 14.4H15.5"/></g></svg><svg style="position:absolute;left:355px;top:895px" width="18" height="18" viewBox="0 0 18 18" fill="none" stroke-linecap="round" stroke-linejoin="round"><rect x="0.8" y="0.8" width="16.5" height="16.5" stroke="#222" stroke-width="1.5" fill="#f7f7f7"/><g stroke="#4cc3f1" stroke-width="1.2"><path d="M6.3 1.5V16.5M11.7 1.5V16.5M1.5 6.3H16.5M1.5 11.7H16.5"/></g></svg><svg style="position:absolute;left:390px;top:896px" width="18" height="16" viewBox="0 0 18 16" fill="none" stroke-linecap="round" stroke-linejoin="round"><path d="M0.5 1.8H17.5" stroke="#3a3a3a" stroke-width="1.3"/><path d="M3 6.5H15" stroke="#4cc3f1" stroke-width="1.3"/><path d="M5 11H13" stroke="#3a3a3a" stroke-width="1.3"/><path d="M7.5 15.5H10.5" stroke="#4cc3f1" stroke-width="1.3"/></svg><svg style="position:absolute;left:425px;top:895px" width="18" height="18" viewBox="0 0 18 18" fill="none" stroke-linecap="round" stroke-linejoin="round"><g transform="translate(9 9.3) scale(1.1) translate(-9 -9)"><path d="M7.8 0.8H10.2L10.7 3Q11.8 3.4 12.7 4.1L14.8 3.3L16 5.4L14.3 6.9Q14.5 8 14.3 9.1L16 10.6L14.8 12.7L12.7 11.9Q11.8 12.6 10.7 13L10.2 15.2H7.8L7.3 13Q6.2 12.6 5.3 11.9L3.2 12.7L2 10.6L3.7 9.1Q3.5 8 3.7 6.9L2 5.4L3.2 3.3L5.3 4.1Q6.2 3.4 7.3 3Z" stroke="#3a3a3a" stroke-width="1.3" transform="translate(0,1)"/><circle cx="9" cy="9" r="2.2" stroke="#4cc3f1" stroke-width="1.3"/></g></svg><svg style="position:absolute;left:461px;top:895px" width="18" height="18" viewBox="0 0 18 18" fill="none" stroke-linecap="round" stroke-linejoin="round"><g stroke="#4cc3f1" stroke-width="1"><path d="M1.3 1.5L2.3 0.8V4.5M1 8Q1.5 7 2.3 7.3Q3 7.8 2 9L1 10H3M1.2 13.5H2.5L1.8 14.5Q3 14.8 2.5 16Q1.8 16.8 1 16"/></g><g stroke="#3a3a3a" stroke-width="1.4"><path d="M6.5 2.5H16M6.5 9H16M6.5 15.5H16"/></g></svg><svg style="position:absolute;left:491px;top:895px" width="19" height="18" viewBox="0 0 19 18" fill="none" stroke-linecap="round" stroke-linejoin="round"><g stroke="#3a3a3a" stroke-width="1.4"><path d="M0.5 1H16.5M0.5 5.8H16.5M0.5 10.6H8.5M0.5 15.4H5.5"/></g><path d="M13.5 9.5V17M9.8 13.3H17.2" stroke="#4cc3f1" stroke-width="1.5"/></svg><svg style="position:absolute;left:527px;top:895px" width="18" height="18" viewBox="0 0 18 18" fill="none" stroke-linecap="round" stroke-linejoin="round"><path d="M7 3.5H1.2V17H14.8V11" stroke="#3a3a3a" stroke-width="1.5"/><path d="M7.5 10.5L16.5 1.5M11 1.2H16.8V7" stroke="#4cc3f1" stroke-width="1.5"/></svg><svg style="position:absolute;left:562px;top:895px" width="18" height="18" viewBox="0 0 18 18" fill="none" stroke-linecap="round" stroke-linejoin="round"><path d="M5.5 14.5H1.5V3.2H12M9.5 0.5L12.5 3.2L9.5 6" stroke="#3a3a3a" stroke-width="1.5"/><path d="M17 5.5V14.5H6.5M9 12L6.2 14.5L9 17" stroke="#4cc3f1" stroke-width="1.5"/></svg><div style="position:absolute;left:316px;top:920px;width:1535px;height:1px;background:#d3d3d3"></div><div style="position:absolute;left:318px;top:925px;width:46px;height:24px;background:#fff;border:1px solid #c9c9c9;border-radius:4px;box-sizing:border-box"></div><svg style="position:absolute;left:339px;top:931px" width="4" height="13" viewBox="0 0 4 13" fill="none" stroke-linecap="round" stroke-linejoin="round"><g fill="#000"><circle cx="2" cy="2" r="1.2"/><circle cx="2" cy="6.5" r="1.2"/><circle cx="2" cy="11" r="1.2"/></g></svg><div style="position:absolute;left:1483px;top:888px;width:265px;height:32px;border:3px solid #ff3b3b;box-sizing:border-box;background:#f5f7f7"></div><div style="position:absolute;left:1488px;top:892px;width:110px;height:24px;background:#fff;border:1px solid #c9c9c9;border-radius:4px;box-sizing:border-box"></div><svg style="position:absolute;left:1505px;top:898px" width="11" height="11" viewBox="0 0 11 11" fill="none" stroke-linecap="round" stroke-linejoin="round"><path d="M5.5 0V11M0 5.5H11" stroke="#3a3a3a" stroke-width="1.6" stroke-linecap="butt"/></svg><div class="t" style="left:1524px;top:897px;line-height:16px;">Добавить</div><div style="position:absolute;left:1602px;top:892px;width:142px;height:24px;background:#fff;border:1px solid #c9c9c9;border-radius:4px;box-sizing:border-box"></div><svg style="position:absolute;left:1619px;top:897px" width="13" height="14" viewBox="0 0 13 14" fill="none" stroke-linecap="round" stroke-linejoin="round"><path d="M2.3 6.4L9.2 0.7L12 3.1L5.6 9.8L1.2 10.9Z" fill="#c4c4c4" stroke="#3a3a3a" stroke-width="1.3"/><path d="M1.5 12.3H12" stroke="#4cc3f1" stroke-width="1.3"/></svg><div class="t" style="left:1639px;top:897px;line-height:16px;">Редактировать</div><div style="position:absolute;left:1749px;top:892px;width:100px;height:24px;background:#fff;border:1px solid #c9c9c9;border-radius:4px;box-sizing:border-box"></div><svg style="position:absolute;left:1765.5px;top:903px" width="12" height="2" viewBox="0 0 12 2" fill="none" stroke-linecap="round" stroke-linejoin="round"><path d="M0 1H11.5" stroke="#3a3a3a" stroke-width="1.6" stroke-linecap="butt"/></svg><div class="t" style="left:1784.5px;top:897px;line-height:16px;">Удалить</div><div style="position:absolute;left:1697px;top:925px;width:46px;height:24px;background:#fff;border:1px solid #c9c9c9;border-radius:4px;box-sizing:border-box"></div><svg style="position:absolute;left:1712px;top:930px" width="15" height="15" viewBox="0 0 15 15" fill="none" stroke-linecap="round" stroke-linejoin="round"><path d="M1.8 5.3Q3.5 0.8 7.5 0.8Q10.5 0.8 12 3" stroke="#3a3a3a" stroke-width="1.5"/><path d="M13.8 0V5.7H8.8Z" fill="#3a3a3a"/><path d="M13.2 8.6Q12 13.2 7.5 13.2Q4.8 13.2 3.2 11" stroke="#4cc3f1" stroke-width="1.5"/><path d="M1.2 14V8.2H6.2Z" fill="#4cc3f1"/></svg><div style="position:absolute;left:1747px;top:925px;width:102px;height:24px;background:#fff;border:1px solid #c9c9c9;border-radius:4px;box-sizing:border-box"></div><svg style="position:absolute;left:1764px;top:931px" width="12" height="12" viewBox="0 0 12 12" fill="none" stroke-linecap="round" stroke-linejoin="round"><path d="M0.5 0.5L11.5 11.5M11.5 0.5L0.5 11.5" stroke="#3a3a3a" stroke-width="1.5"/></svg><div class="t" style="left:1783.5px;top:930px;line-height:16px;">Закрыть</div></body></html>
